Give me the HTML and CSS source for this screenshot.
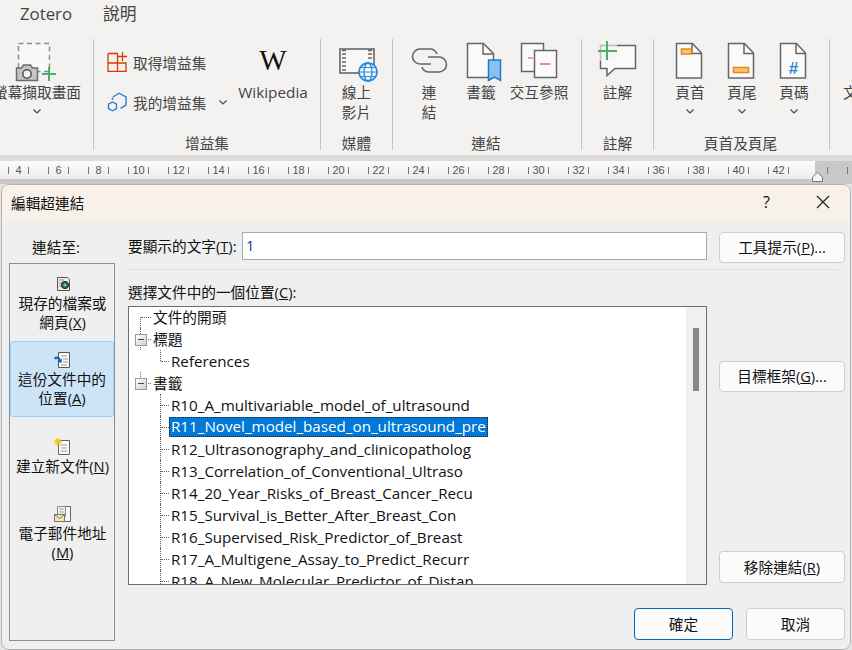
FILE: index.html
```html
<!DOCTYPE html>
<html lang="zh-Hant">
<head>
<meta charset="utf-8">
<title>編輯超連結</title>
<link rel="stylesheet" href="styles.css">
</head>
<body>
<div class="app">
  <nav class="menu"><span>Zotero</span><span>說明</span></nav>
  <div class="ribbon">
    <section class="group g1">
      <div class="gbody">
        <div class="rb capture">
          <svg class="ico" width="88" height="43" viewBox="-7 39 88 43">
            <rect x="18.5" y="43.5" width="31" height="28" fill="#f9f9f9" stroke="#8c8c8c" stroke-width="1.5" stroke-dasharray="5 3.5"/>
            <path d="M16.5 68h5l2-3h7l2 3h5v12.5h-21z" fill="#c4c4c4" stroke="#6b6b6b" stroke-width="1.5"/>
            <circle cx="27" cy="74" r="4.2" fill="#f3f3f3" stroke="#555" stroke-width="1.6"/>
            <path d="M49 67v14M42 74h14" stroke="#4caf63" stroke-width="2" fill="none"/>
          </svg>
          <span class="t">螢幕擷取畫面</span>
          <svg class="chev" width="8" height="5" viewBox="0 0 8 5"><path d="M.5.5 4 4 7.500.5" fill="none" stroke="#444" stroke-width="1.1"/></svg>
        </div>
      </div>
    </section>
    <section class="group g2">
      <div class="gbody">
        <div class="smallcol">
          <div class="sb">
            <svg width="20" height="20" viewBox="0 0 20 20"><path d="M1 1.500h9.500v9.500M1 1.500v18h18v-8.500H1M10.500 11v8.500" fill="none" stroke="#d83b01" stroke-width="1.300"/><path d="M15.500 0v9M11 4.500h9" stroke="#d83b01" stroke-width="1.300"/></svg>
            <span>取得增益集</span>
          </div>
          <div class="sb">
            <svg width="20" height="20" viewBox="0 0 20 20"><path d="M6 5 12 1.200l7 3.800v8l-5.500 3.400M5.500 8V5.400" fill="none" stroke="#2b7cd3" stroke-width="1.400"/><path d="M5.500 10l4 2.200v4.400l-4 2.200-4-2.200v-4.400z" fill="none" stroke="#2b7cd3" stroke-width="1.400"/></svg>
            <span>我的增益集</span>
            <svg class="chev side" width="8" height="5" viewBox="0 0 8 5"><path d="M.5.5 4 4 7.500.5" fill="none" stroke="#444" stroke-width="1.1"/></svg>
          </div>
        </div>
        <div class="rb wiki">
          <span class="wglyph">W</span>
          <span class="t">Wikipedia</span>
        </div>
      </div>
      <div class="glabel">增益集</div>
    </section>
    <section class="group g3">
      <div class="gbody">
        <div class="rb full">
          <svg class="ico" width="71" height="43" viewBox="321 39 71 43">
            <rect x="340" y="49" width="34" height="24" fill="#f8f8f8" stroke="#666" stroke-width="1.600"/>
            <path d="M342 50.500h4M342 54h4M342 58h4M342 62h4M342 66h4M342 70h4M368 50.500h4M368 54h4M368 58h4" stroke="#666" stroke-width="1.500"/>
            <circle cx="368" cy="72" r="9" fill="#f8f8f8" stroke="#2b88d8" stroke-width="1.800"/>
            <ellipse cx="368" cy="72" rx="4" ry="9" fill="none" stroke="#2b88d8" stroke-width="1.300"/>
            <path d="M359 72h18M360.500 67.500h15M360.500 76.500h15" stroke="#2b88d8" stroke-width="1.200"/>
          </svg>
          <span class="t">線上<br>影片</span>
        </div>
      </div>
      <div class="glabel">媒體</div>
    </section>
    <section class="group g4">
      <div class="gbody">
        <div class="rb w52">
          <svg class="ico" width="52" height="43" viewBox="403 39 52 43">
            <path d="M431 64h-11a7.500 7.500 0 0 1 0-15h10a7.500 7.500 0 0 1 7 5" fill="none" stroke="#666" stroke-width="1.600"/>
            <path d="M428 57h11a7.500 7.500 0 0 1 0 15h-10a7.500 7.500 0 0 1-7-5" fill="none" stroke="#666" stroke-width="1.600"/>
          </svg>
          <span class="t">連<br>結</span>
        </div>
        <div class="rb w52">
          <svg class="ico" width="52" height="43" viewBox="455 39 52 43">
            <path d="M467.500 43.500h16l10 10v24h-26z" fill="#fafafa" stroke="#666" stroke-width="1.500"/>
            <path d="M483 44v10h10" fill="none" stroke="#666" stroke-width="1.500"/>
            <path d="M488.500 60h12v20.500l-6-3.500-6 3.500z" fill="#8cc0ee" stroke="#1f7bc4" stroke-width="1.500"/>
          </svg>
          <span class="t">書籤</span>
        </div>
        <div class="rb w64">
          <svg class="ico" width="64" height="43" viewBox="507 39 64 43">
            <rect x="521.500" y="43.500" width="22" height="28" fill="#fafafa" stroke="#666" stroke-width="1.500"/>
            <rect x="534.500" y="50.500" width="22" height="27" fill="#fafafa" stroke="#666" stroke-width="1.500"/>
            <path d="M528 58h5" stroke="#f0808a" stroke-width="1.500"/>
            <path d="M540 64h10" stroke="#e8606c" stroke-width="1.500"/>
          </svg>
          <span class="t">交互參照</span>
        </div>
      </div>
      <div class="glabel shifted">連結</div>
    </section>
    <section class="group g5">
      <div class="gbody">
        <div class="rb full">
          <svg class="ico" width="71" height="43" viewBox="582 39 71 43">
            <path d="M600.500 45.500h35v23h-20.500l-8 7v-7h-6.500z" fill="#fafafa" stroke="#666" stroke-width="1.500"/>
            <rect x="598" y="42" width="19" height="19" fill="#f3f2f1" opacity=".6"/>
            <path d="M607 41v19M598 51h19" stroke="#4caf63" stroke-width="2"/>
          </svg>
          <span class="t">註解</span>
        </div>
      </div>
      <div class="glabel">註解</div>
    </section>
    <section class="group g6">
      <div class="gbody">
        <div class="rb w52">
          <svg class="ico" width="52" height="43" viewBox="664 39 52 43">
            <path d="M676.500 43.500h16l9 9.500v25h-25z" fill="#fafafa" stroke="#666" stroke-width="1.500"/>
            <path d="M692 44v9.500h9.500" fill="none" stroke="#666" stroke-width="1.500"/>
            <rect x="681.500" y="49" width="10" height="5" fill="#fbc56e" stroke="#e08a1e" stroke-width="1.500"/>
          </svg>
          <span class="t">頁首</span>
          <svg class="chev" width="8" height="5" viewBox="0 0 8 5"><path d="M.5.5 4 4 7.500.5" fill="none" stroke="#444" stroke-width="1.1"/></svg>
        </div>
        <div class="rb w52">
          <svg class="ico" width="52" height="43" viewBox="716 39 52 43">
            <path d="M728.500 43.500h16l9 9.500v25h-25z" fill="#fafafa" stroke="#666" stroke-width="1.500"/>
            <path d="M744 44v9.500h9.500" fill="none" stroke="#666" stroke-width="1.500"/>
            <rect x="733.500" y="67.500" width="15" height="5" fill="#fbc56e" stroke="#e08a1e" stroke-width="1.500"/>
          </svg>
          <span class="t">頁尾</span>
          <svg class="chev" width="8" height="5" viewBox="0 0 8 5"><path d="M.5.5 4 4 7.500.5" fill="none" stroke="#444" stroke-width="1.1"/></svg>
        </div>
        <div class="rb w52">
          <svg class="ico" width="52" height="43" viewBox="768 39 52 43">
            <path d="M780.500 43.500h16l9 9.500v25h-25z" fill="#fafafa" stroke="#666" stroke-width="1.500"/>
            <path d="M796 44v9.500h9.500" fill="none" stroke="#666" stroke-width="1.500"/>
            <text x="793.500" y="74" class="hash">#</text>
          </svg>
          <span class="t">頁碼</span>
          <svg class="chev" width="8" height="5" viewBox="0 0 8 5"><path d="M.5.5 4 4 7.500.5" fill="none" stroke="#444" stroke-width="1.1"/></svg>
        </div>
      </div>
      <div class="glabel shifted">頁首及頁尾</div>
    </section>
    <section class="group g7">
      <div class="gbody"><div class="rb clipped"><span class="t">文字方塊</span></div></div>
    </section>
  </div>
  <div class="band"></div>
  <div class="ruler">
    <span class="rn">4</span><span class="rn">6</span><span class="rn">8</span><span class="rn">10</span><span class="rn">12</span><span class="rn">14</span><span class="rn">16</span><span class="rn">18</span><span class="rn">20</span><span class="rn">22</span><span class="rn">24</span><span class="rn">26</span><span class="rn">28</span><span class="rn">30</span><span class="rn">32</span><span class="rn">34</span><span class="rn">36</span><span class="rn">38</span><span class="rn">40</span><span class="rn">42</span>
    <div class="rend"><i></i><i></i></div>
    <svg class="indent" width="11" height="10" viewBox="0 0 11 10"><path d="M.5 9.500V5L5.500.5 10.500 5v4.500z" fill="#f6f6f6" stroke="#777"/></svg>
  </div>
  <div class="dialog">
    <header class="dhead">
      <span class="dtitle">編輯超連結</span>
      <span class="help">?</span>
      <svg class="close" width="14" height="14" viewBox="0 0 14 14"><path d="M1 1l12 12M13 1 1 13" stroke="#222" stroke-width="1.200"/></svg>
    </header>
    <div class="dbody">
      <aside class="navcol">
        <div class="navlabel">連結至:</div>
        <div class="navpanel">
          <div class="navitem">
            <svg width="20" height="20" viewBox="0 0 20 20"><path d="M4.500 3.500h10l2 2v11h-12z" fill="#f5efd8" stroke="#555"/><path d="M6 6h5M6 9h3M6 12h3" stroke="#888"/><circle cx="12" cy="11" r="3.600" fill="#1d6a8a" stroke="#222"/><circle cx="12" cy="11" r="1.500" fill="#8fd14f"/></svg>
            <span>現存的檔案或<br>網頁(<u>X</u>)</span>
          </div>
          <div class="navitem active">
            <svg width="20" height="20" viewBox="0 0 20 20"><path d="M6.500 2.500h11v15h-11z" fill="#fafafa" stroke="#555"/><path d="M9 6h6M11 9h5M11 12h5M9 15h6" stroke="#999"/><path d="M2 7.500c3-2 6-1 6.500 2l1.500-1-.5 4.500-4-1.500 1.500-1c-.5-1.500-2.500-2-4-1z" fill="#1f5fc4"/></svg>
            <span>這份文件中的<br>位置(<u>A</u>)</span>
          </div>
          <div class="navitem newdoc">
            <svg width="20" height="20" viewBox="0 0 20 20"><path d="M5.500 3.500h11v14h-11z" fill="#fafafa" stroke="#666"/><path d="M8 8h6M8 11h6M8 14h6" stroke="#a8a088"/><path d="M5 .500l1 2.500 2.500-1-1.500 2.500 2.500 1-2.500.8 1 2.500-2.500-1.500-1.500 2-.5-2.500-2.500.500 1.500-2-2-1.500 2.500-.5-.5-2.500 2 1.500z" fill="#f2c811"/></svg>
            <span>建立新文件(<u>N</u>)</span>
          </div>
          <div class="navitem mail">
            <svg width="20" height="20" viewBox="0 0 20 20"><path d="M7.500 2.500h10v15h-10z" fill="#fafafa" stroke="#666"/><path d="M4.500 2.500h8v10h-8z" fill="#f0f0f0" stroke="#888"/><path d="M6.500 5h4M6.500 8h4" stroke="#999"/><rect x="1.500" y="10.500" width="10" height="7" fill="#f7e7a6" stroke="#777"/><path d="M1.500 10.500l5 4 5-4" fill="none" stroke="#777"/></svg>
            <span>電子郵件地址<br>(<u>M</u>)</span>
          </div>
        </div>
      </aside>
      <main class="content">
        <div class="row1">
          <label class="textlabel">要顯示的文字(<u>T</u>):</label>
          <div class="input">1</div>
          <button class="btn">工具提示(<u>P</u>)...</button>
        </div>
        <hr class="rule">
        <div class="row2">
          <div class="treecol">
            <div class="treelabel">選擇文件中的一個位置(<u>C</u>):</div>
            <div class="tree">
              <div class="treelist">
                <div class="r l1 first">文件的開頭</div>
                <div class="r l1 exp"><i class="box"></i>標題</div>
                <div class="r l2 last">References</div>
                <div class="r l1 exp end"><i class="box"></i>書籤</div>
                <div class="r l2">R10_A_multivariable_model_of_ultrasound</div>
                <div class="r l2 sel"><span>R11_Novel_model_based_on_ultrasound_pre</span></div>
                <div class="r l2">R12_Ultrasonography_and_clinicopatholog</div>
                <div class="r l2">R13_Correlation_of_Conventional_Ultraso</div>
                <div class="r l2">R14_20_Year_Risks_of_Breast_Cancer_Recu</div>
                <div class="r l2">R15_Survival_is_Better_After_Breast_Con</div>
                <div class="r l2">R16_Supervised_Risk_Predictor_of_Breast</div>
                <div class="r l2">R17_A_Multigene_Assay_to_Predict_Recurr</div>
                <div class="r l2">R18_A_New_Molecular_Predictor_of_Distan</div>
              </div>
              <div class="sbar"><div class="thumb"></div></div>
            </div>
          </div>
          <div class="sidecol">
            <button class="btn frame">目標框架(<u>G</u>)...</button>
            <button class="btn remove">移除連結(<u>R</u>)</button>
          </div>
        </div>
        <div class="footer">
          <button class="btn ok">確定</button>
          <button class="btn cancel">取消</button>
        </div>
      </main>
    </div>
  </div>
</div>
</body>
</html>
```
FILE: styles.css
```css
* { box-sizing: border-box; }
html, body { margin: 0; padding: 0; }
body {
  width: 852px;
  height: 650px;
  overflow: hidden;
  background: #e4e4e4;
  font-family: "Open Sans", "Noto Sans CJK TC", sans-serif;
  font-size: 14.67px;
  color: #111;
}
.app { width: 852px; height: 650px; overflow: hidden; display: flex; flex-direction: column; }

.menu {
  height: 28px;
  background: #f3f2f1;
  display: flex;
  align-items: center;
  gap: 31px;
  padding: 0 0 2px 20px;
  font-size: 16.800px;
  color: #444;
  flex: none;
}
.ribbon {
  height: 127px;
  flex: none;
  background: #f3f2f1;
  display: flex;
  padding-top: 11px;
  padding-bottom: 5px;
  color: #444;
  overflow: hidden;
}
.group {
  height: 111px;
  display: flex;
  flex-direction: column;
  border-right: 1px solid #c4c4c4;
  flex: none;
}
.g1 { width: 94px; }
.g2 { width: 227px; }
.g3 { width: 72px; }
.g4 { width: 189px; padding-left: 10px; }
.g5 { width: 72px; }
.g6 { width: 176px; padding-left: 10px; }
.g7 { border-right: 0; padding-left: 13px; }
.gbody { display: flex; flex: 1; min-height: 0; }
.glabel { height: 20px; line-height: 20px; margin-bottom: -3px; text-align: center; }
.glabel.shifted { margin-left: -10px; margin-right: 2px; }
.rb { display: flex; flex-direction: column; align-items: center; }
.t { line-height: 20px; text-align: center; white-space: nowrap; }
.ico { display: block; flex: none; }
.chev { display: block; margin-top: 7px; flex: none; }
.capture { width: 88px; margin-left: -7px; flex: none; }
.w52 { width: 52px; flex: none; }
.w64 { width: 64px; flex: none; }
.full { width: 71px; flex: none; }
.clipped { padding-top: 43px; }

.smallcol { padding: 3px 0 0 13px; width: 134px; flex: none; }
.sb { height: 40px; display: flex; align-items: center; gap: 6px; white-space: nowrap; }
.sb svg { flex: none; }
.chev.side { margin: 0 0 0 7px; }
.wiki { width: 70px; margin-left: 10px; flex: none; }
.wiki .t { font-size: 15.300px; }
.wglyph {
  font-family: "Liberation Serif", serif;
  font-size: 29px;
  line-height: 43px;
  height: 43px;
  color: #111;
}
.hash { font: bold 17px "Liberation Sans", sans-serif; fill: #2b88d8; text-anchor: middle; }

.band { height: 6px; background: #dcdcdc; flex: none; }
.ruler {
  position: relative;
  height: 23px;
  flex: none;
  display: flex;
  padding-left: 8px;
  background: linear-gradient(#fdfdfd, #ececec);
  border-bottom: 5px solid #c8c8c8;
  font-family: "Liberation Sans", sans-serif;
  font-size: 11px;
  color: #555;
}
.rn {
  width: 21px;
  height: 7px;
  margin: 6px 19px 0 0;
  border-left: 1px solid #777;
  border-right: 1px solid #777;
  display: flex;
  align-items: center;
  justify-content: center;
  flex: none;
  line-height: 7px;
}
.rend {
  position: absolute;
  left: 815px;
  top: 0;
  width: 37px;
  height: 18px;
  background: #c8c8c8;
  display: flex;
  gap: 19px;
  padding: 6px 0 0 12px;
}
.rend i { width: 1px; height: 7px; background: #777; }
.indent { position: absolute; left: 812px; top: 11px; }

.dialog {
  margin-left: 1px;
  margin-right: 1px;
  height: 466px;
  flex: none;
  background: #efefef;
  border: 1px solid #b4b4b4;
  border-radius: 8px;
  overflow: hidden;
  display: flex;
  flex-direction: column;
}
.dhead {
  height: 37px;
  flex: none;
  background: #f8f1e9;
  display: flex;
  align-items: center;
  padding: 0 20px 3px 9px;
}
.dtitle { flex: 1; }
.help { margin-right: 46px; font-size: 16px; }
.dbody { display: flex; flex: 1; min-height: 0; }

.navcol { width: 126px; flex: none; padding-left: 7px; display: flex; flex-direction: column; }
.navlabel { height: 41px; padding: 15px 0 0; text-align: center; line-height: 20px; width: 94px; }
.navpanel { width: 106px; height: 378px; border: 1px solid #8a8f96; }
.navitem {
  height: 76px;
  margin: 0 -1px 0 0;
  display: flex;
  flex-direction: column;
  align-items: center;
  justify-content: center;
  text-align: center;
  line-height: 19px;
  white-space: nowrap;
  border: 1px solid transparent;
}
.navitem svg { display: block; }
.navitem.active { background: #cce4f7; border-color: #99d1ff; border-radius: 3px; margin-right: 0; }
.navitem:first-child { height: 77px; }
.navitem.newdoc { padding-top: 2px; }
.navitem.mail { padding-top: 4px; }

.content { width: 717px; flex: none; display: flex; flex-direction: column; padding-top: 10px; }
.row1 { display: flex; align-items: flex-start; height: 31px; flex: none; }
.textlabel { width: 114px; line-height: 28px; white-space: nowrap; flex: none; }
.input {
  width: 465px;
  height: 28px;
  background: #fff;
  border: 1px solid #aaa;
  padding-left: 3px;
  line-height: 24px;
  color: #0a3a8c;
  flex: none;
}
.btn {
  font: inherit;
  color: #111;
  width: 126px;
  height: 31px;
  margin: 0;
  padding: 0 0 2px;
  background: #fbfbfb;
  border: 1px solid #cdcdcd;
  border-radius: 4px;
  white-space: nowrap;
  flex: none;
}
.row1 .btn { margin-left: 12px; }
.rule { height: 1px; border: 0; margin: 6px 7px 0 0; background: #dedede; flex: none; }
.row2 { display: flex; height: 315px; flex: none; }
.treecol { width: 579px; flex: none; padding-top: 12px; }
.treelabel { height: 24px; line-height: 20px; }
.tree { height: 279px; border: 1px solid #6d6d6d; background: #fff; display: flex; overflow: hidden; }
.treelist { flex: 1; min-width: 0; overflow: hidden; margin-top: -1px; }
.sbar { width: 20px; background: #f0f0f0; flex: none; padding: 21px 0 0 7px; }
.thumb { width: 6px; height: 63px; background: #888; }

.r { position: relative; height: 22px; line-height: 22px; white-space: nowrap; color: #111; }
.r::before { content: ""; position: absolute; top: 11px; border-top: 1px dotted #666; }
.r::after { content: ""; position: absolute; top: 0; bottom: 0; border-left: 1px dotted #666; }
.l1 { padding-left: 24px; }
.l1::before { left: 12px; width: 10px; }
.l1::after { left: 11px; }
.l1.first::after { top: 11px; }
.l1.end::after { bottom: 11px; }
.l2 { padding-left: 42px; font-size: 15.200px; }
.l2::before { left: 32px; width: 8px; }
.l2::after { left: 31px; }
.l2.last::after { bottom: 11px; }
.box {
  position: absolute;
  left: 6px;
  top: 6px;
  width: 12px;
  height: 12px;
  z-index: 1;
  border: 1px solid #9a9a9a;
  background: linear-gradient(135deg, #fff, #cfcfcf);
}
.box::after { content: ""; position: absolute; left: 2px; right: 2px; top: 4px; height: 1px; background: #2b4a8c; }
.sel span {
  display: block;
  position: absolute;
  left: 40px;
  top: 1px;
  width: 319px;
  height: 20px;
  line-height: 19px;
  padding-left: 2px;
  background: #0078d7;
  color: #fff;
  outline: 1px dotted #222;
  outline-offset: -1px;
}
.sidecol { width: 138px; flex: none; display: flex; flex-direction: column; padding: 91px 0 0 12px; }
.frame { height: 31px; }
.remove { margin-top: 159px; height: 32px; }
.footer { display: flex; justify-content: flex-end; gap: 13px; padding: 23px 0 0 0; }
.footer .btn { width: 99px; height: 32px; }
.ok { border-color: #0067c0; }
```
